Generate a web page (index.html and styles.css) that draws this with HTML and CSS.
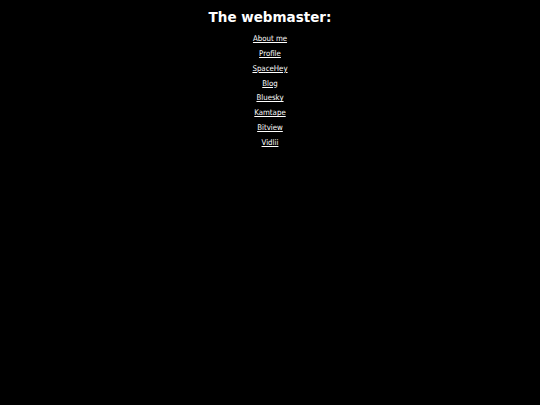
FILE: index.html
```html
<!DOCTYPE html>
<html>
<head>
<meta charset="utf-8">
<link rel="stylesheet" href="styles.css">
</head>
<body>
<h1 class="title">The webmaster:</h1>
<ul class="links">
<li><a href="#">About me</a></li>
<li><a href="#">Profile</a></li>
<li><a href="#">SpaceHey</a></li>
<li><a href="#">Blog</a></li>
<li><a href="#">Bluesky</a></li>
<li><a href="#">Kamtape</a></li>
<li><a href="#">Bitview</a></li>
<li><a href="#">Vidlii</a></li>
</ul>
</body>
</html>
```
FILE: styles.css
```css
html, body {
  background: #000;
  color: #fff;
}
body {
  margin: 0;
  font-family: "DejaVu Sans", sans-serif;
  text-align: center;
}
.title {
  font-size: 13.5px;
  font-weight: bold;
  margin: 9px 0 0;
  line-height: 17px;
}
.links {
  list-style: none;
  margin: 6.2px 0 0;
  padding: 0;
}
.links li {
  font-family: "DejaVu Sans Condensed", "DejaVu Sans", sans-serif;
  font-size: 7.8px;
  line-height: 14.8px;
}
.links a {
  color: #fff;
}
```
